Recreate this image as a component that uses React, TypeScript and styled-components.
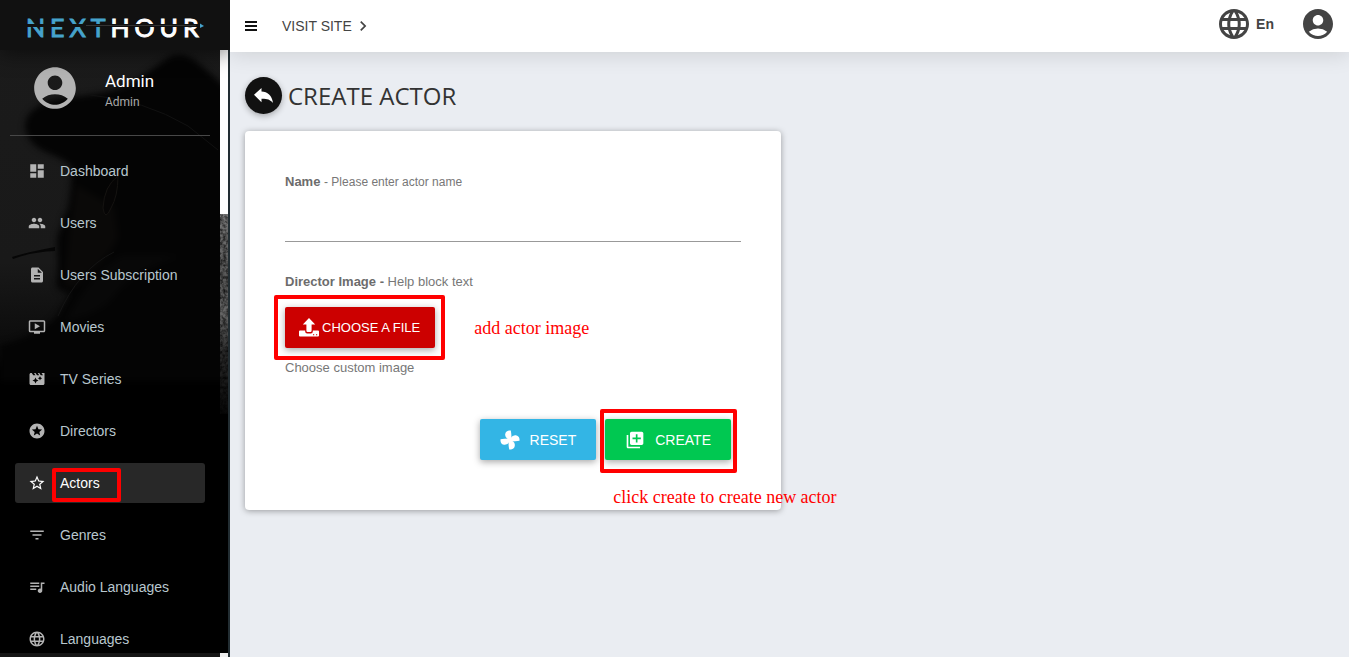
import React from "react";
import styled, { createGlobalStyle, css } from "styled-components";
import {
  MdDashboard, MdPeople, MdDescription, MdOndemandVideo, MdMovieFilter, MdStars,
  MdStarBorder, MdFilterList, MdQueueMusic, MdLanguage, MdAccountCircle,
  MdLibraryAdd, MdChevronRight,
} from "react-icons/md";

const sans = `"Liberation Sans", Arial, sans-serif`;
const red = "#ff0000";

const GlobalStyle = createGlobalStyle`
  *, *::before, *::after { box-sizing: border-box; }
  body { margin: 0; background: #eaedf2; font-family: ${sans}; font-size: 14px; color: #333; }
  a { color: inherit; text-decoration: none; }
  button { font: inherit; cursor: pointer; }
`;

const Page = styled.div`
  display: flex;
  height: 100vh;
  overflow: hidden;
`;

const Sidebar = styled.aside`
  position: relative;
  flex: 0 0 230px;
  display: flex;
  flex-direction: column;
  overflow: hidden;
  background: #000;
`;

const Backdrop = styled.svg`
  position: absolute;
  top: 0;
  left: 0;
  width: 228px;
  height: 657px;
`;

const LogoBar = styled.a`
  position: relative;
  z-index: 2;
  flex: 0 0 50px;
  display: flex;
  align-items: center;
  padding: 4px 0 0 26px;
  background: #111;
  box-shadow: 0 4px 20px rgba(0, 0, 0, 0.5);
`;

const Wordmark = styled.span`
  position: relative;
  font: 400 25px/30px Lato, sans-serif;
  letter-spacing: 5px;
  color: #fff;
  -webkit-text-stroke: 1px currentColor;
  white-space: nowrap;
`;

const WordmarkAccent = styled.span`
  color: #46a3cc;
`;

const Slash = styled.svg`
  position: absolute;
  left: 0;
  top: 10px;
  width: 178px;
  height: 8px;
`;

const SidebarBody = styled.div`
  position: relative;
  flex: 1;
  min-height: 0;
  display: flex;
  border-right: 2px solid #222d32;
`;

const SidebarContent = styled.div`
  flex: 1;
  min-width: 0;
  overflow: hidden;
`;

const ScrollTrack = styled.div`
  flex: 0 0 8px;
  display: flex;
  flex-direction: column;
  justify-content: space-between;
`;

const ScrollThumb = styled.div`
  height: 164px;
  background: #fff;
`;

const ScrollEnd = styled.div`
  height: 4px;
  background: #eee;
`;

const Profile = styled.div`
  display: flex;
  align-items: center;
  gap: 25px;
  height: 86px;
  margin: 0 10px;
  padding: 0 0 10px 20px;
  border-bottom: 1px solid #484848;
  color: #b3b3b3;
  font-family: Roboto, sans-serif;
`;

const ProfileText = styled.div`
  padding-top: 5px;
`;

const ProfileName = styled.div`
  font-size: 17px;
  line-height: 24px;
  color: #fff;
`;

const ProfileRole = styled.div`
  font-size: 12px;
  line-height: 18px;
  color: #a9a9a9;
`;

const Menu = styled.nav`
  display: flex;
  flex-direction: column;
  gap: 12px;
  padding: 15px;
`;

const MenuItem = styled.a<{ $active?: boolean }>`
  flex: 0 0 40px;
  display: flex;
  align-items: center;
  gap: 14px;
  padding-left: 13px;
  border-radius: 3px;
  color: #b8c7ce;
  svg { color: #b3b3b3; }
  ${(p) => p.$active && css`
    background: #282828;
    color: #fff;
    svg { color: #fff; }
  `}
`;

const Marked = styled.span`
  position: relative;
  display: inline-flex;
`;

const Frame = styled.span<{ $inset: string }>`
  position: absolute;
  inset: ${(p) => p.$inset};
  border: 4px solid ${red};
  border-radius: 2px;
  pointer-events: none;
`;

const Main = styled.div`
  flex: 1;
  min-width: 0;
  display: flex;
  flex-direction: column;
`;

const TopBar = styled.header`
  flex: 0 0 52px;
  display: flex;
  align-items: center;
  padding: 0 15px;
  background: #fff;
  box-shadow: 0 2px 22px rgba(0, 0, 0, 0.13);
`;

const IconButton = styled.button`
  display: flex;
  align-items: center;
  padding: 0;
  border: 0;
  background: none;
  color: #111;
`;

const VisitSite = styled.a`
  display: flex;
  align-items: center;
  gap: 1px;
  margin-left: 25px;
  color: #444;
`;

const TopRight = styled.div`
  display: flex;
  align-items: center;
  gap: 26px;
  margin: 0 -2px 4px auto;
`;

const LanguageButton = styled(IconButton)`
  gap: 4px;
  color: #444;
  font-weight: 700;
`;

const AccountButton = styled(IconButton)`
  color: #444;
`;

const Content = styled.main`
  padding: 25px 15px;
`;

const TitleRow = styled.div`
  display: flex;
  align-items: center;
  gap: 6px;
`;

const BackLink = styled.a`
  display: flex;
  align-items: center;
  justify-content: center;
  width: 37px;
  height: 37px;
  border-radius: 50%;
  background: #111;
  color: #fff;
  box-shadow: 0 2px 6px rgba(0, 0, 0, 0.3);
`;

const Title = styled.h1`
  margin: 0;
  font: 400 24px/36px "Open Sans", sans-serif;
  color: #333;
`;

const Columns = styled.div`
  display: grid;
  grid-template-columns: 1fr 1fr;
  gap: 17px;
  margin-top: 17px;
`;

const Card = styled.form`
  display: flex;
  flex-direction: column;
  padding: 40px 40px 50px;
  border-radius: 4px;
  background: #fff;
  box-shadow: 0 1px 6px rgba(0, 0, 0, 0.35);
`;

const Label = styled.label`
  font-size: 13px;
  line-height: 22px;
  font-weight: 700;
  color: #6c6c6c;
`;

const Hint = styled.small<{ $size?: number }>`
  font-size: ${(p) => p.$size ?? 13}px;
  line-height: 22px;
  font-weight: 400;
  color: #777;
`;

const TextInput = styled.input`
  height: 38px;
  margin: 11px 0 29px;
  padding: 0;
  border: 0;
  border-bottom: 1px solid #999;
  background: transparent;
  font: 14px ${sans};
  outline: none;
`;

const FileRow = styled.div`
  display: flex;
  align-items: center;
  gap: 39px;
  margin: 14px 0 9px;
`;

const Note = styled.span`
  font: 18px/20px "Liberation Serif", serif;
  color: ${red};
  white-space: nowrap;
`;

const CreateNote = styled(Note)`
  position: absolute;
  top: 68px;
  left: 8px;
`;

const ActionButton = styled.button<{ $color: string }>`
  display: flex;
  align-items: center;
  gap: 10px;
  height: 41px;
  padding: 0 20px;
  border: 0;
  border-radius: 2px;
  background: ${(p) => p.$color};
  color: #fff;
  box-shadow: 0 2px 7px rgba(0, 0, 0, 0.35);
`;

const FileButton = styled(ActionButton)`
  gap: 3px;
  padding: 0 15px 0 14px;
  font-size: 13px;
`;

const Actions = styled.div`
  display: flex;
  justify-content: flex-end;
  gap: 9px;
  margin: 40px 10px 0 0;
`;

const BarsIcon = () => (
  <svg width="12" height="10" viewBox="0 0 12 10" fill="currentColor" aria-hidden="true">
    <path d="M0 0h12v2H0zM0 4h12v2H0zM0 8h12v2H0z" />
  </svg>
);

const ReplyIcon = () => (
  <svg width="19" height="15" viewBox="0 0 19 15" fill="currentColor" aria-hidden="true">
    <path d="M0 6.800L7.500 0v3.500c6 .2 10.500 3.700 11.500 11.500-3-3.500-6-4.300-11.500-4.200v3.400z" />
  </svg>
);

const FanIcon = () => (
  <svg width="20" height="20" viewBox="0 0 20 20" fill="currentColor" aria-hidden="true">
    {[0, 90, 180, 270].map((angle) => (
      <path key={angle} transform={`rotate(${angle} 10 10)`} d="M11.500 11.500L8 9.200Q4.800 7.500 5.200 4.200 5.600 1 9 .5h1.800q1 5 .7 11z" />
    ))}
  </svg>
);

const UploadIcon = () => (
  <svg width="20" height="20" viewBox="0 0 20 20" fill="currentColor" aria-hidden="true">
    <path d="M10 0l6.200 6.500h-3.600v6.300q0 1.200-1.200 1.200H8.600q-1.200 0-1.200-1.200V6.500H3.800z" />
    <path fillRule="evenodd" d="M1 12.500h5.200v1q0 1.900 1.900 1.900h3.800q1.900 0 1.900-1.900v-1H19q1 0 1 1V17.500q0 1-1 1H1q-1 0-1-1V13.500q0-1 1-1zM14 16.200v1h1.200v-1zm3 0v1h1.200v-1z" />
  </svg>
);

const SidebarBackdrop = () => (
  <Backdrop viewBox="0 0 228 657" preserveAspectRatio="none" aria-hidden="true">
    <defs>
      <linearGradient id="wall" x1="0" y1="0" x2="0" y2="1">
        <stop offset="0" stopColor="#1b1b1b" />
        <stop offset=".4" stopColor="#191919" />
        <stop offset=".54" stopColor="#0a0a0a" />
        <stop offset=".57" stopColor="#000" />
      </linearGradient>
      <linearGradient id="strip" x1="0" y1="0" x2="0" y2="1">
        <stop offset="0" stopColor="#757575" />
        <stop offset=".35" stopColor="#555" />
        <stop offset=".5" stopColor="#666" />
        <stop offset=".7" stopColor="#282828" />
        <stop offset="1" stopColor="#080808" />
      </linearGradient>
      <filter id="soft" colorInterpolationFilters="sRGB"><feGaussianBlur stdDeviation="3" /></filter>
      <filter id="grain" x="0" y="0" width="1" height="1">
        <feTurbulence type="fractalNoise" baseFrequency=".3" numOctaves="3" seed="4" />
        <feColorMatrix values="0 0 0 0 0  0 0 0 0 0  0 0 0 0 0  1.500 0 0 0 -.5" />
        <feComposite in2="SourceGraphic" operator="in" />
      </filter>
    </defs>
    <rect width="228" height="657" fill="url(#wall)" />
    <g filter="url(#soft)">
      <path fill="#040404" d="M25 128q-1-25 45-31 40-3 62-14 18-12 34-24 14-10 30 2l34 30v290H0v-36q35-8 56-28l14-24q-10 0-14-8 2-12 2-22l-1-20q0-12 6-18-2-6 4-14 4-16 5-44-8-8-24-14-20-8-23-25z" />
      <path fill="#0a0908" d="M76 185q-8 50-12 100 8 8 20-8 25-18 34-40l-4-30z" />
      <path fill="#080808" d="M66 320q24-46 55-64l60 0q-50 14-70 44-20 18-45 20z" />
    </g>
    <path d="M90 95q54 5 98 31l30 24" stroke="#111" fill="none" />
    <path d="M58 316q20-46 56-64" stroke="#141414" fill="none" />
    <path d="M118 176q-14 10-15 32 2 14 8 0 7-12 7-32z" stroke="#151311" fill="#060505" />
    <path d="M12 257q16-5 43-10v4q-24 1-42 8z" fill="#060606" />
    <rect x="220" y="214" width="8" height="200" fill="url(#strip)" />
    <rect x="220" y="214" width="8" height="200" fill="#000" filter="url(#grain)" />
    <rect y="653" width="220" height="4" fill="#151515" />
  </Backdrop>
);

const menu = [
  { label: "Dashboard", Icon: MdDashboard },
  { label: "Users", Icon: MdPeople },
  { label: "Users Subscription", Icon: MdDescription },
  { label: "Movies", Icon: MdOndemandVideo },
  { label: "TV Series", Icon: MdMovieFilter },
  { label: "Directors", Icon: MdStars },
  { label: "Actors", Icon: MdStarBorder, active: true },
  { label: "Genres", Icon: MdFilterList },
  { label: "Audio Languages", Icon: MdQueueMusic },
  { label: "Languages", Icon: MdLanguage },
];

export default function App() {
  return (
    <Page>
      <GlobalStyle />
      <Sidebar>
        <SidebarBackdrop />
        <LogoBar href="#">
          <Wordmark>
            <WordmarkAccent>NEXT</WordmarkAccent>HOUR
            <Slash viewBox="0 0 178 8" aria-hidden="true">
              <path d="M0 2h172v3H0z" fill="#111" />
              <path d="M60 3h110v1H60z" fill="#333" />
              <path d="M174 1.500l4 2.500-4 2z" fill="#46a3cc" />
            </Slash>
          </Wordmark>
        </LogoBar>
        <SidebarBody>
          <SidebarContent>
            <Profile>
              <MdAccountCircle size={50} />
              <ProfileText>
                <ProfileName>Admin</ProfileName>
                <ProfileRole>Admin</ProfileRole>
              </ProfileText>
            </Profile>
            <Menu>
              {menu.map(({ label, Icon, active }) => (
                <MenuItem key={label} href="#" $active={active}>
                  <Icon size={18} />
                  {active ? <Marked>{label}<Frame $inset="-7px -21px -11px -8px" /></Marked> : label}
                </MenuItem>
              ))}
            </Menu>
          </SidebarContent>
          <ScrollTrack>
            <ScrollThumb />
            <ScrollEnd />
          </ScrollTrack>
        </SidebarBody>
      </Sidebar>
      <Main>
        <TopBar>
          <IconButton type="button" aria-label="Toggle menu"><BarsIcon /></IconButton>
          <VisitSite href="#">VISIT SITE <MdChevronRight size={20} /></VisitSite>
          <TopRight>
            <LanguageButton type="button"><MdLanguage size={36} />En</LanguageButton>
            <AccountButton type="button" aria-label="Account"><MdAccountCircle size={36} /></AccountButton>
          </TopRight>
        </TopBar>
        <Content>
          <TitleRow>
            <BackLink href="#" aria-label="Back"><ReplyIcon /></BackLink>
            <Title>CREATE ACTOR</Title>
          </TitleRow>
          <Columns>
            <Card onSubmit={(e) => e.preventDefault()}>
              <Label htmlFor="name">Name <Hint $size={12}>- Please enter actor name</Hint></Label>
              <TextInput id="name" type="text" />
              <Label htmlFor="image">Director Image - <Hint>Help block text</Hint></Label>
              <FileRow>
                <Marked>
                  <FileButton id="image" type="button" $color="#cc0000"><UploadIcon />CHOOSE A FILE</FileButton>
                  <Frame $inset="-12px -10px -12px -11px" />
                </Marked>
                <Note>add actor image</Note>
              </FileRow>
              <Hint>Choose custom image</Hint>
              <Actions>
                <ActionButton type="reset" $color="#33b5e5"><FanIcon />RESET</ActionButton>
                <Marked>
                  <ActionButton type="submit" $color="#00c851"><MdLibraryAdd size={20} />CREATE</ActionButton>
                  <Frame $inset="-10px -6px -13px -5px" />
                  <CreateNote>click create to create new actor</CreateNote>
                </Marked>
              </Actions>
            </Card>
          </Columns>
        </Content>
      </Main>
    </Page>
  );
}
